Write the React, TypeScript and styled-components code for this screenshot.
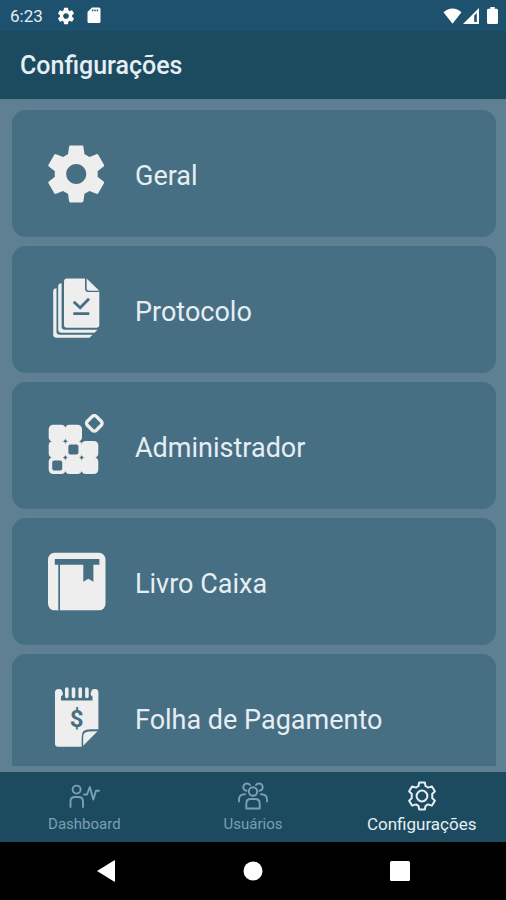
import React from "react";
import styled, { createGlobalStyle } from "styled-components";

const colors = {
  status: "#1d516d",
  bar: "#1c4b60",
  page: "#5f7f92",
  card: "#476f83",
  ink: "#eeeeee",
  text: "#e6eef4",
  muted: "#7c9fb5",
};

const GlobalStyle = createGlobalStyle`
  *, *::before, *::after { box-sizing: border-box; }
  body { margin: 0; background: #000; font-family: Roboto, "Noto Sans", sans-serif; }
  button { font: inherit; color: inherit; border: 0; padding: 0; background: none; cursor: pointer; }
  svg { display: block; flex: none; }
`;

const Screen = styled.div`
  height: 100vh;
  display: flex;
  flex-direction: column;
  background: ${colors.page};
  color: ${colors.text};
`;

const StatusBar = styled.div`
  flex: none;
  height: 31px;
  padding: 0 8px 0 10px;
  display: flex;
  align-items: center;
  justify-content: space-between;
  background: ${colors.status};
`;

const StatusGroup = styled.div<{ $gap: number }>`
  display: flex;
  align-items: center;
  gap: ${(p) => p.$gap}px;
`;

const Clock = styled.time`
  font-size: 17px;
  line-height: 20px;
  margin-right: 2px;
`;

const AppBar = styled.header`
  flex: none;
  height: 68px;
  padding: 2px 20px 0;
  display: flex;
  align-items: center;
  background: ${colors.bar};
`;

const Title = styled.h1`
  margin: 0;
  font-size: 25px;
  line-height: 32px;
  font-weight: 500;
`;

const Content = styled.main`
  flex: 1;
  min-height: 0;
  padding-bottom: 6px;
  display: flex;
`;

const CardList = styled.ul`
  flex: 1;
  margin: 0;
  padding: 11px 10px 0 12px;
  list-style: none;
  overflow: auto;
  scrollbar-width: none;
  display: flex;
  flex-direction: column;
  gap: 9px;
`;

const CardItem = styled.li`
  flex: none;
  display: flex;
`;

const Card = styled.button`
  flex: 1;
  height: 127px;
  padding: 0 32px;
  display: flex;
  align-items: center;
  gap: 27px;
  text-align: left;
  border-radius: 14px;
  background: ${colors.card};
`;

const CardLabel = styled.span`
  padding-top: 4px;
  font-size: 27px;
  line-height: 32px;
`;

const TabBar = styled.nav`
  flex: none;
  height: 70px;
  display: grid;
  grid-template-columns: repeat(3, 1fr);
  background: ${colors.bar};
`;

const Tab = styled.button<{ $active?: boolean }>`
  padding-top: 1px;
  display: flex;
  flex-direction: column;
  align-items: center;
  justify-content: center;
  gap: 3px;
  color: ${(p) => (p.$active ? colors.text : colors.muted)};
  font-size: ${(p) => (p.$active ? 17 : 15)}px;
  line-height: 20px;
`;

const SystemNav = styled.div`
  flex: none;
  height: 58px;
  padding: 0 33px;
  display: grid;
  grid-template-columns: repeat(3, 1fr);
  background: #000;
  color: #fff;
`;

const SystemButton = styled.button`
  display: flex;
  align-items: center;
  justify-content: center;
`;

const GEAR =
  "M19.43 12.98c.04-.32.07-.64.07-.98s-.03-.66-.07-.98l2.11-1.65c.19-.15.24-.42.12-.64l-2-3.46c-.12-.22-.39-.3-.61-.22l-2.49 1c-.52-.4-1.08-.73-1.69-.98l-.38-2.65C14.46 2.18 14.25 2 14 2h-4c-.25 0-.46.18-.49.42l-.38 2.65c-.61.25-1.17.59-1.69.98l-2.49-1c-.23-.09-.49 0-.61.22l-2 3.46c-.13.22-.07.49.12.64l2.11 1.65c-.04.32-.07.65-.07.98s.03.66.07.98l-2.11 1.65c-.19.15-.24.42-.12.64l2 3.46c.12.22.39.3.61.22l2.49-1c.52.4 1.08.73 1.69.98l.38 2.65c.03.24.24.42.49.42h4c.25 0 .46-.18.49-.42l.38-2.65c.61-.25 1.17-.59 1.69-.98l2.49 1c.23.09.49 0 .61-.22l2-3.46c.12-.22.07-.49-.12-.64l-2.11-1.65zM12 15.5c-1.93 0-3.5-1.57-3.5-3.5s1.57-3.5 3.5-3.5 3.5 1.57 3.5 3.5-1.57 3.5-3.5 3.5z";

const CardIcon = ({ children }: { children: React.ReactNode }) => (
  <svg width="64" height="64" viewBox="0 0 64 64" fill={colors.ink} aria-hidden="true">
    {children}
  </svg>
);

const GearIcon = () => (
  <CardIcon>
    <path transform="translate(-2.2 -2.2) scale(2.87 2.85)" d={GEAR} />
  </CardIcon>
);

const ProtocolIcon = () => (
  <CardIcon>
    <path d="M12.5 10.3V53.5Q12.5 56.8 15.8 56.8H48.5L45.5 59.8H12.5Q9.2 59.8 9.2 56.5V13.5Q9.2 10.3 12.5 10.3Z" />
    <path d="M17.6 5.3V48.5Q17.6 51.8 20.9 51.8H53.5L50.5 54.8H17.6Q14.2 54.8 14.2 51.5V8.6Q14.2 5.3 17.6 5.3Z" />
    <path d="M23 .4H41V10.5Q41 14 44.5 14H55.3V47Q55.3 49.8 52.5 49.8H23Q20 49.8 20 47V3.4Q20 .4 23 .4Z" />
    <path d="M42.6 .4L55.3 12.8H45.5Q42.6 12.8 42.6 10Z" />
    <path d="M29.7 23.7L36.2 29.8L45 20.7M29.3 35.7H45.3" fill="none" stroke={colors.card} strokeWidth="2.8" />
  </CardIcon>
);

const tiles = [
  [5, 11], [21.3, 11],
  [5, 27.2], [21.3, 27.2], [37.6, 27.2],
  [5, 43.4], [21.3, 43.4], [37.6, 43.4],
];

const AdminIcon = () => (
  <CardIcon>
    {tiles.map(([x, y]) => (
      <rect key={`${x}-${y}`} x={x - 0.3} y={y - 0.3} width="17" height="16.9" rx="4.4" />
    ))}
    <rect x="24.4" y="30.4" width="10" height="10" rx="2" fill={colors.card} />
    <rect x="8.2" y="46.6" width="10" height="10" rx="2" fill={colors.card} />
    <rect
      x="44" y="3" width="12.6" height="12.6" rx="2.8"
      transform="rotate(45 50.3 9.3)"
      fill="none" stroke={colors.ink} strokeWidth="3.4"
    />
  </CardIcon>
);

const BookIcon = () => (
  <CardIcon>
    <rect x="4" y="2.8" width="57.5" height="57.5" rx="6.5" />
    <path d="M10.8 9H55.4V14.8H49.4V31.7L44.3 28.8L39.3 31.7V14.8H16V60.3H14.3V14.8H10.8Z" fill={colors.card} />
  </CardIcon>
);

const PayrollIcon = () => (
  <CardIcon>
    <path d="M14.5 3C16.5 2.6 18.2 4 18.3 6C19.5 7 19 9.6 17 10.6V14.6H48.5V10.6C46.5 9.6 46 7 47.2 6C47.3 4 49 2.6 51 3Q54.4 3.2 54.4 6.5V43.3C48 43.3 44 43 40.5 44.5C37.5 46 37.8 49 37.6 60.7H14.2Q11 60.7 11 57.5V6.5Q11 3.2 14.5 3Z" />
    <path d="M22.8 3V10.5M29.5 3V10.5M36.2 3V10.5M42.9 3V10.5" stroke={colors.ink} strokeWidth="3.6" strokeLinecap="round" />
    <path d="M53.5 45.3L39.2 59.8V51C39.2 47 41 46 45 45.5Z" />
    <text x="32.6" y="41" textAnchor="middle" fontSize="24" fontWeight="700" fill={colors.card}>$</text>
  </CardIcon>
);

const SmallGear = () => (
  <svg width="18" height="18" viewBox="1 1 22 22" fill="#fff" aria-hidden="true">
    <path d={GEAR} />
  </svg>
);

const SdCard = () => (
  <svg width="14" height="17" viewBox="0 0 14 17" fill="#fff" aria-hidden="true">
    <path d="M5 .5H12Q13.5 .5 13.5 2V14.5Q13.5 16 12 16H2Q.5 16 .5 14.5V5Z" />
    <path d="M5.6 2.5V4.3M8 2.5V4.3M10.4 2.5V4.3" stroke={colors.status} strokeWidth="1.4" />
  </svg>
);

const Wifi = () => (
  <svg width="19" height="16" viewBox="0 0 19 16" fill="#fff" aria-hidden="true">
    <path d="M9.5 15.8L.5 4.2C5.5-.9 13.5-.9 18.5 4.2Z" />
  </svg>
);

const Signal = () => (
  <svg width="16" height="16" viewBox="0 0 16 16" fill="#fff" aria-hidden="true">
    <path d="M0 16L16 0V16ZM11.2 7.5V14H13.8V5Z" fillRule="evenodd" />
  </svg>
);

const Battery = () => (
  <svg width="11" height="17" viewBox="0 0 11 17" fill="#fff" aria-hidden="true">
    <path d="M3.3 0H7.7V1.8H9.5Q11 1.8 11 3.2V15.5Q11 17 9.5 17H1.5Q0 17 0 15.5V3.2Q0 1.8 1.5 1.8H3.3Z" />
  </svg>
);

const line = { fill: "none", stroke: "currentColor", strokeLinecap: "round", strokeLinejoin: "round" } as const;

const DashboardIcon = () => (
  <svg width="32" height="30" viewBox="0 0 32 30" strokeWidth="1.9" {...line} aria-hidden="true">
    <circle cx="8.6" cy="8.6" r="4" />
    <path d="M2.5 26V20.5Q2.5 16 7 16H10.5Q15 16 15 20.5V26" />
    <path d="M16 13.5H19L21.8 6L25.3 18.5L28 9.8H31" />
  </svg>
);

const UsersIcon = () => (
  <svg width="32" height="30" viewBox="0 0 32 30" strokeWidth="1.9" {...line} aria-hidden="true">
    <circle cx="16" cy="10.5" r="4.2" />
    <path d="M9.3 27.5V22.5Q9.3 18 13.8 18H18.2Q22.7 18 22.7 22.5V27.5Z" />
    <path d="M9.5 9.8A3.7 3.7 0 1 1 13 4M8 13.2Q2 13.2 2 18.5V20.5" />
    <path d="M22.5 9.8A3.7 3.7 0 1 0 19 4M24 13.2Q30 13.2 30 18.5V20.5" />
  </svg>
);

const SettingsIcon = () => (
  <svg width="32" height="30" viewBox="0 0 32 30" strokeWidth="2" {...line} aria-hidden="true">
    <circle cx="16" cy="15" r="5.4" />
    <path d="M13.2 1.5H18.8L19.6 5.2Q20.8 5.7 22 6.6L25.8 5.4L28.9 10.3L26.2 13Q26.4 15 26.2 17L28.9 19.7L25.8 24.6L22 23.4Q20.8 24.3 19.6 24.8L18.8 28.5H13.2L12.4 24.8Q11.2 24.3 10 23.4L6.2 24.6L3.1 19.7L5.8 17Q5.6 15 5.8 13L3.1 10.3L6.2 5.4L10 6.6Q11.2 5.7 12.4 5.2Z" />
  </svg>
);

const sections = [
  { label: "Geral", Icon: GearIcon },
  { label: "Protocolo", Icon: ProtocolIcon },
  { label: "Administrador", Icon: AdminIcon },
  { label: "Livro Caixa", Icon: BookIcon },
  { label: "Folha de Pagamento", Icon: PayrollIcon },
];

const tabs = [
  { label: "Dashboard", Icon: DashboardIcon },
  { label: "Usuários", Icon: UsersIcon },
  { label: "Configurações", Icon: SettingsIcon, active: true },
];

export default function App() {
  return (
    <>
      <GlobalStyle />
      <Screen>
        <StatusBar>
          <StatusGroup $gap={12}>
            <Clock>6:23</Clock>
            <SmallGear />
            <SdCard />
          </StatusGroup>
          <StatusGroup $gap={1}>
            <Wifi />
            <StatusGroup $gap={8}>
              <Signal />
              <Battery />
            </StatusGroup>
          </StatusGroup>
        </StatusBar>
        <AppBar>
          <Title>Configurações</Title>
        </AppBar>
        <Content>
          <CardList>
            {sections.map(({ label, Icon }) => (
              <CardItem key={label}>
                <Card type="button">
                  <Icon />
                  <CardLabel>{label}</CardLabel>
                </Card>
              </CardItem>
            ))}
          </CardList>
        </Content>
        <TabBar>
          {tabs.map(({ label, Icon, active }) => (
            <Tab key={label} type="button" $active={active} aria-current={active ? "page" : undefined}>
              <Icon />
              {label}
            </Tab>
          ))}
        </TabBar>
        <SystemNav>
          <SystemButton type="button" aria-label="Voltar">
            <svg width="18" height="22" viewBox="0 0 18 22" fill="currentColor">
              <path d="M0 11L17 .5Q18 0 18 1V21Q18 22 17 21.5Z" />
            </svg>
          </SystemButton>
          <SystemButton type="button" aria-label="Início">
            <svg width="20" height="20" viewBox="0 0 20 20" fill="currentColor">
              <circle cx="10" cy="10" r="9.5" />
            </svg>
          </SystemButton>
          <SystemButton type="button" aria-label="Recentes">
            <svg width="20" height="20" viewBox="0 0 20 20" fill="currentColor">
              <rect width="20" height="20" rx="1.5" />
            </svg>
          </SystemButton>
        </SystemNav>
      </Screen>
    </>
  );
}
